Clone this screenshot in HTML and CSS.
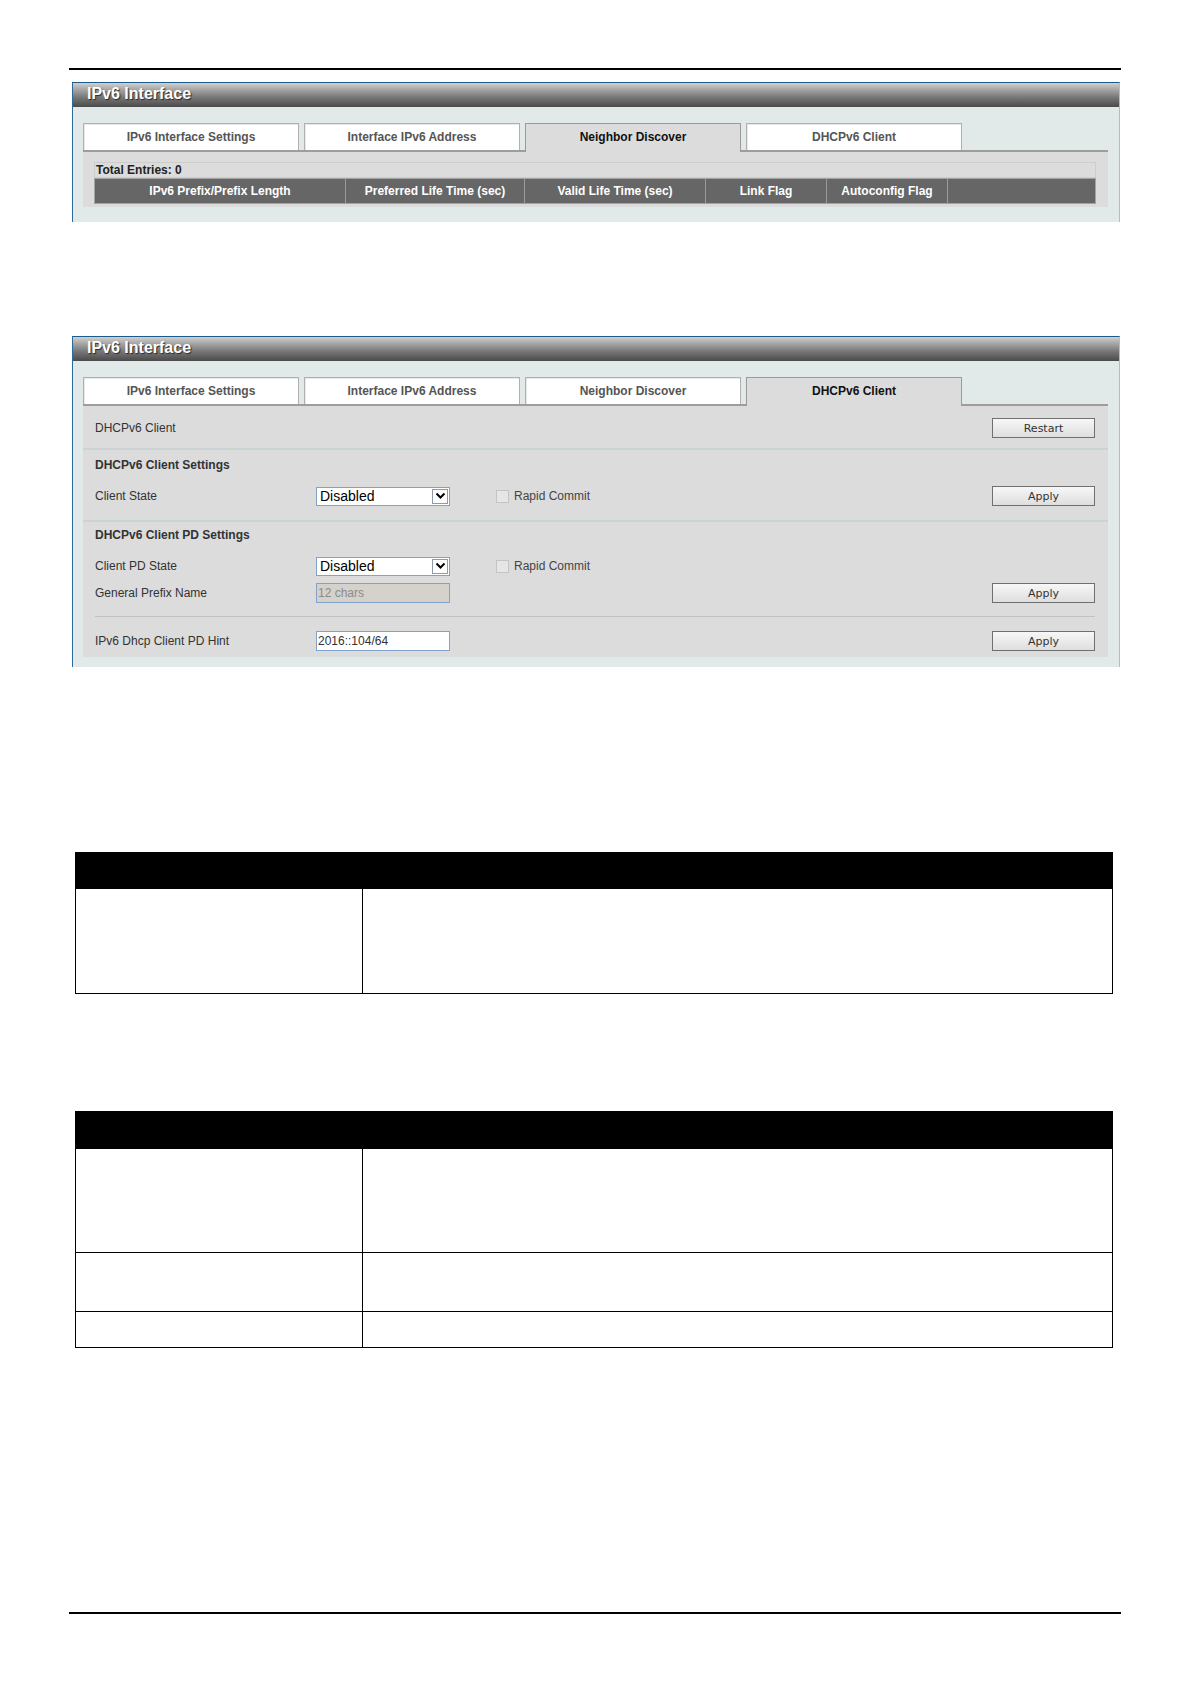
FILE: index.html
```html
<!DOCTYPE html>
<html lang="en">
<head>
<meta charset="utf-8">
<title>IPv6 Interface</title>
<link rel="stylesheet" href="styles.css">
</head>
<body>
<div class="page">
  <div class="rule"></div>

  <!-- Neighbor Discover tab -->
  <section class="panel panel-nd">
    <div class="panel-head">IPv6 Interface</div>
    <div class="panel-body">
      <div class="tabs">
        <div class="tab">IPv6 Interface Settings</div>
        <div class="tab">Interface IPv6 Address</div>
        <div class="tab active">Neighbor Discover</div>
        <div class="tab">DHCPv6 Client</div>
      </div>
      <div class="tab-content nd">
        <div class="total">Total Entries: 0</div>
        <div class="grid-head">
          <div>IPv6 Prefix/Prefix Length</div>
          <div>Preferred Life Time (sec)</div>
          <div>Valid Life Time (sec)</div>
          <div>Link Flag</div>
          <div>Autoconfig Flag</div>
          <div></div>
        </div>
      </div>
    </div>
  </section>

  <!-- DHCPv6 Client tab -->
  <section class="panel panel-dhcp">
    <div class="panel-head">IPv6 Interface</div>
    <div class="panel-body">
      <div class="tabs">
        <div class="tab">IPv6 Interface Settings</div>
        <div class="tab">Interface IPv6 Address</div>
        <div class="tab">Neighbor Discover</div>
        <div class="tab active">DHCPv6 Client</div>
      </div>
      <div class="tab-content">
        <div class="row-top">
          <span class="label">DHCPv6 Client</span>
          <button class="btn" type="button">Restart</button>
        </div>

        <div class="section section-b">
          <div class="sec-title">DHCPv6 Client Settings</div>
          <div class="form-row">
            <span class="label fixed">Client State</span>
            <div class="select"><span class="sel-text">Disabled</span><span class="sel-arrow"><svg width="11" height="8" viewBox="0 0 11 8"><path d="M1.5 1.5 L5.5 5.5 L9.5 1.5" fill="none" stroke="#000" stroke-width="2"/></svg></span></div>
            <span class="check"><span class="box"></span>Rapid Commit</span>
            <button class="btn push" type="button">Apply</button>
          </div>
        </div>

        <div class="section section-c">
          <div class="sec-title">DHCPv6 Client PD Settings</div>
          <div class="form-row first">
            <span class="label fixed">Client PD State</span>
            <div class="select"><span class="sel-text">Disabled</span><span class="sel-arrow"><svg width="11" height="8" viewBox="0 0 11 8"><path d="M1.5 1.5 L5.5 5.5 L9.5 1.5" fill="none" stroke="#000" stroke-width="2"/></svg></span></div>
            <span class="check"><span class="box"></span>Rapid Commit</span>
          </div>
          <div class="form-row second">
            <span class="label fixed">General Prefix Name</span>
            <input class="field disabled" type="text" value="12 chars" disabled>
            <button class="btn push" type="button">Apply</button>
          </div>
          <div class="thin-sep"></div>
          <div class="form-row hint">
            <span class="label fixed">IPv6 Dhcp Client PD Hint</span>
            <input class="field" type="text" value="2016::104/64">
            <button class="btn push" type="button">Apply</button>
          </div>
        </div>
      </div>
    </div>
  </section>

  <div class="doc doc-one">
    <div class="doc-head"></div>
    <div class="doc-row r104"><div></div><div></div></div>
  </div>

  <div class="doc doc-two">
    <div class="doc-head"></div>
    <div class="doc-row r103"><div></div><div></div></div>
    <div class="doc-row r58"><div></div><div></div></div>
    <div class="doc-row r35"><div></div><div></div></div>
  </div>

  <div class="rule rule-bottom"></div>
</div>
</body>
</html>
```

FILE: styles.css
```css
body {
  margin: 0;
  background: #fff;
  font-family: "Liberation Sans", Arial, sans-serif;
  min-height: 1684px;
}

.page {
  width: 1052px;
  margin-left: 69px;
  padding-top: 68px;
}

.rule {
  border-top: 2px solid #000;
}

.rule-bottom {
  margin-top: 264px;
}

/* ---------- window panel ---------- */
.panel {
  width: 1048px;
  margin-left: 3px;
  box-sizing: border-box;
  border-top: 1px solid #1d5a8c;
  border-left: 1px solid #2d6a9c;
  border-right: 1px solid #9fc3df;
  background: #e1e9e9;
}

.panel-nd {
  margin-top: 12px;
}

.panel-dhcp {
  margin-top: 114px;
}

.panel-head {
  height: 24px;
  padding-left: 14px;
  background: linear-gradient(#d0d0d0 0%, #a9a9a9 25%, #777 60%, #4a4a4a 100%);
  color: #fff;
  font-weight: bold;
  font-size: 16px;
  line-height: 22px;
  text-shadow: 1px 1px 1px #2a2a2a;
}

.panel-body {
  padding: 16px 11px 0 10px;
}

.panel-nd .panel-body {
  padding-bottom: 15px;
}

.panel-dhcp .panel-body {
  padding-bottom: 10px;
}

/* ---------- tabs ---------- */
.tabs {
  display: flex;
  align-items: flex-start;
  gap: 5px;
  height: 27px;
}

.tab {
  width: 216px;
  height: 27px;
  box-sizing: border-box;
  background: #fff;
  border: 1px solid #b0b0b0;
  border-bottom: none;
  box-shadow: inset 1px 1px 0 #e8e8e8;
  color: #555;
  font-size: 12px;
  font-weight: bold;
  display: flex;
  align-items: center;
  justify-content: center;
}

.tab.active {
  position: relative;
  z-index: 1;
  height: 29px;
  padding-bottom: 2px;
  background: #dcdcdc;
  border-color: #9a9a9a;
  box-shadow: none;
  color: #111;
}

.tab-content {
  background: #dcdcdc;
  border-top: 2px solid #9d9d9d;
}

/* ---------- neighbor discover table ---------- */
.nd {
  padding: 10px 12px 3px 11px;
}

.total {
  height: 16px;
  box-sizing: border-box;
  border: 1px solid #cdcdcd;
  padding-left: 1px;
  color: #222;
  font-size: 12px;
  font-weight: bold;
  line-height: 14px;
}

.grid-head {
  display: grid;
  grid-template-columns: 251px 179px 181px 121px 121px 1fr;
  height: 26px;
  box-sizing: border-box;
  border: 1px solid #a3a3a3;
  background: #666;
}

.grid-head > div {
  border-right: 1px solid #9a9a9a;
  color: #fff;
  font-size: 12px;
  font-weight: bold;
  display: flex;
  align-items: center;
  justify-content: center;
}

.grid-head > div:last-child {
  border-right: none;
}

/* ---------- DHCPv6 client form ---------- */
.label {
  color: #333;
  font-size: 12px;
}

.label.fixed {
  width: 221px;
  flex: none;
}

.row-top {
  display: flex;
  align-items: center;
  justify-content: space-between;
  padding: 12px 13px 10px 12px;
  border-bottom: 2px solid #cad4d5;
}

.section {
  padding-left: 12px;
  padding-right: 13px;
}

.section-b {
  padding-top: 8px;
  padding-bottom: 14px;
  border-bottom: 2px solid #cad4d5;
}

.section-c {
  padding-top: 6px;
  padding-bottom: 6px;
}

.sec-title {
  height: 14px;
  color: #333;
  font-size: 12px;
  font-weight: bold;
  line-height: 14px;
}

.form-row {
  display: flex;
  align-items: center;
  height: 20px;
  margin-top: 14px;
}

.form-row.second {
  margin-top: 7px;
}

.thin-sep {
  height: 1px;
  margin-top: 13px;
  background: #bfc3c4;
}

.select {
  width: 134px;
  height: 19px;
  box-sizing: border-box;
  border: 1px solid #7fa3cc;
  background: #fff;
  display: flex;
  align-items: center;
  justify-content: space-between;
}

.sel-text {
  padding-left: 3px;
  color: #000;
  font-size: 14px;
}

.sel-arrow {
  width: 16px;
  height: 15px;
  margin-right: 1px;
  box-sizing: border-box;
  border: 1px solid #8e9bab;
  background: #fff;
  display: flex;
  align-items: center;
  justify-content: center;
}

.check {
  margin-left: 46px;
  display: flex;
  align-items: center;
  color: #444;
  font-size: 12px;
}

.check .box {
  width: 13px;
  height: 13px;
  margin-right: 5px;
  box-sizing: border-box;
  border: 1px solid #c4c4c4;
  background: #e6e6e6;
}

.field {
  width: 134px;
  height: 20px;
  margin: 0;
  padding: 0 1px;
  box-sizing: border-box;
  border: 1px solid #7fa3cc;
  background: #fff;
  color: #333;
  font-family: "Liberation Sans", Arial, sans-serif;
  font-size: 12px;
}

.field.disabled {
  background: #d5d2cc;
  color: #8a8a8a;
}

.btn {
  width: 103px;
  height: 20px;
  margin: 0;
  padding: 0;
  box-sizing: border-box;
  border: 1px solid #707070;
  background: linear-gradient(#f7f7f7, #dedede);
  color: #333;
  font-family: "DejaVu Sans", sans-serif;
  font-size: 11px;
}

.btn.push {
  margin-left: auto;
}

/* ---------- document tables ---------- */
.doc {
  width: 1038px;
  margin-left: 6px;
  box-sizing: border-box;
  border: 1px solid #000;
}

.doc-one {
  margin-top: 185px;
}

.doc-two {
  margin-top: 117px;
}

.doc-head {
  height: 35px;
  background: #000;
}

.doc-row {
  display: grid;
  grid-template-columns: 287px 1fr;
  border-top: 1px solid #000;
}

.doc-row > div:first-child {
  border-right: 1px solid #000;
}

.doc-one .doc-head {
  height: 35px;
}

.doc-two .doc-head {
  height: 36px;
}

.r104 { height: 104px; }
.r103 { height: 103px; }
.r58 { height: 58px; }
.r35 { height: 35px; }
```
